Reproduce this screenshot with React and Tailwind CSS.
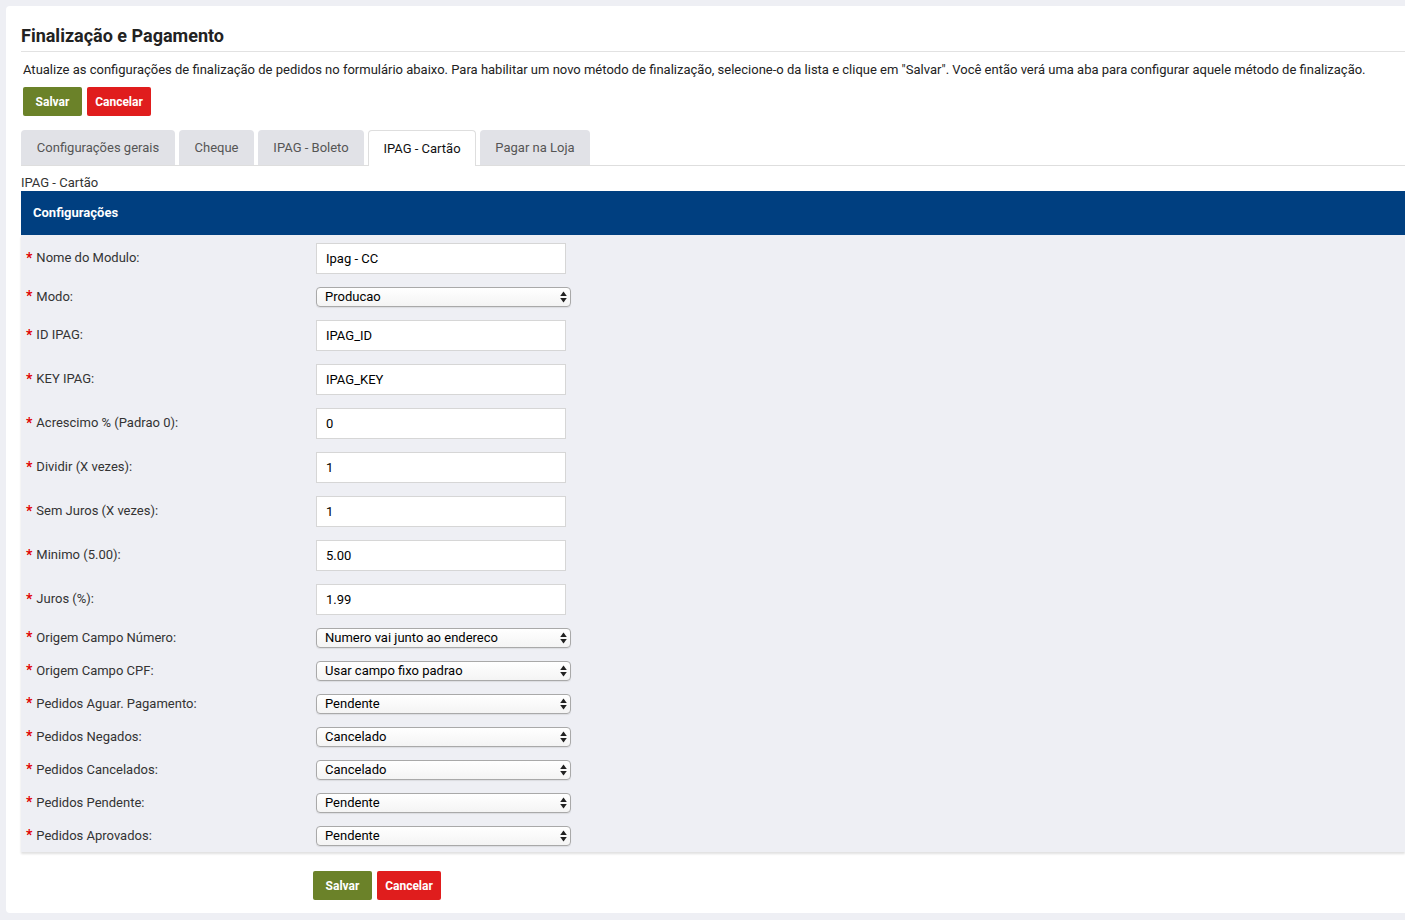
import React from "react";

const font = { fontFamily: "Roboto, 'Liberation Sans', sans-serif" };

const tabs = [
  { label: "Configurações gerais", w: "w-[154px]" },
  { label: "Cheque", w: "w-[75px]" },
  { label: "IPAG - Boleto", w: "w-[106px]" },
  { label: "IPAG - Cartão", w: "w-[108px]", active: true },
  { label: "Pagar na Loja", w: "w-[110px]" },
];

const fields = [
  { label: "Nome do Modulo:", type: "input", value: "Ipag - CC" },
  { label: "Modo:", type: "select", value: "Producao" },
  { label: "ID IPAG:", type: "input", value: "IPAG_ID" },
  { label: "KEY IPAG:", type: "input", value: "IPAG_KEY" },
  { label: "Acrescimo % (Padrao 0):", type: "input", value: "0" },
  { label: "Dividir (X vezes):", type: "input", value: "1" },
  { label: "Sem Juros (X vezes):", type: "input", value: "1" },
  { label: "Minimo (5.00):", type: "input", value: "5.00" },
  { label: "Juros (%):", type: "input", value: "1.99" },
  { label: "Origem Campo Número:", type: "select", value: "Numero vai junto ao endereco" },
  { label: "Origem Campo CPF:", type: "select", value: "Usar campo fixo padrao" },
  { label: "Pedidos Aguar. Pagamento:", type: "select", value: "Pendente" },
  { label: "Pedidos Negados:", type: "select", value: "Cancelado" },
  { label: "Pedidos Cancelados:", type: "select", value: "Cancelado" },
  { label: "Pedidos Pendente:", type: "select", value: "Pendente" },
  { label: "Pedidos Aprovados:", type: "select", value: "Pendente" },
];

const Buttons = () => (
  <div className="flex gap-[5px]">
    <button className="h-[29px] w-[59px] rounded-[2px] bg-[#6b8229] text-[12px] font-bold text-white">
      Salvar
    </button>
    <button className="h-[29px] w-[64px] rounded-[2px] bg-[#e01d1d] text-[12px] font-bold text-white">
      Cancelar
    </button>
  </div>
);

const SelectBox = ({ value }) => (
  <div className="relative h-[20px] w-[255px]">
    <select
      defaultValue={value}
      className="block h-[20px] w-full appearance-none rounded-[4px] border border-[#a9a9a9] bg-gradient-to-b from-white to-[#f4f4f4] pl-[8px] text-[13px] leading-[18px] text-black shadow-[0_1px_1px_rgba(0,0,0,0.08)] outline-none"
    >
      <option>{value}</option>
    </select>
    <svg
      className="pointer-events-none absolute right-[4px] top-[4px]"
      width="7"
      height="12"
      viewBox="0 0 7 12"
    >
      <path d="M3.5 0.5 L6.8 5 H0.2 Z" fill="#222" />
      <path d="M3.5 11.5 L6.8 7 H0.2 Z" fill="#222" />
    </svg>
  </div>
);

export default function App() {
  return (
    <div className="h-[920px] w-full overflow-hidden bg-[#eeeff4] pl-[6px] pt-[6px]" style={font}>
      <div className="h-[907px] rounded-l-[4px] bg-white pl-[15px]">
        <div className="pt-[19px]">
          <h1 className="pb-[4px] text-[18px] font-bold leading-[22px] text-[#222]">
            Finalização e Pagamento
          </h1>
          <div className="h-px bg-[#e2e2e2]" />
          <p className="pl-[2px] pt-[9px] text-[13px] leading-[17px] text-[#222]">
            Atualize as configurações de finalização de pedidos no formulário abaixo. Para habilitar um novo método de finalização, selecione-o da lista e clique em "Salvar". Você então verá uma aba para configurar aquele método de finalização.
          </p>
          <div className="pl-[2px] pt-[9px]">
            <Buttons />
          </div>
        </div>

        <div className="mt-[14px] flex gap-[4px] border-b border-[#dedede]">
          {tabs.map((t) => (
            <div
              key={t.label}
              className={`flex h-[35px] items-center justify-center rounded-t-[4px] text-[13px] ${t.w} ${
                t.active
                  ? "-mb-px h-[36px] border border-b-0 border-[#dedede] bg-white text-[#111]"
                  : "bg-[#e1e2e7] text-[#555]"
              }`}
            >
              {t.label}
            </div>
          ))}
        </div>

        <div className="pt-[9px] text-[13px] leading-[16px] text-[#333]">IPAG - Cartão</div>

        <div className="flex h-[44px] items-center bg-[#003f80] pl-[12px] text-[13px] font-bold text-white">
          Configurações
        </div>

        <div className="bg-[#eeeff4] pt-px shadow-[0_2px_2px_rgba(0,0,0,0.12)]">
          {fields.map((f) => (
            <div
              key={f.label}
              className={`flex items-center ${f.type === "input" ? "h-[44px]" : "h-[33px]"}`}
            >
              <div className="flex w-[295px] items-center pl-[5px] text-[13px] text-[#333]">
                <span className="mr-[4px] text-[14px] font-bold text-[#e00000]">*</span>
                {f.label}
              </div>
              {f.type === "input" ? (
                <input
                  defaultValue={f.value}
                  className="h-[31px] w-[250px] border border-[#d6d6d6] bg-white pl-[9px] text-[13px] text-black outline-none"
                />
              ) : (
                <SelectBox value={f.value} />
              )}
            </div>
          ))}
        </div>

        <div className="pl-[292px] pt-[19px]">
          <Buttons />
        </div>
      </div>
    </div>
  );
}
